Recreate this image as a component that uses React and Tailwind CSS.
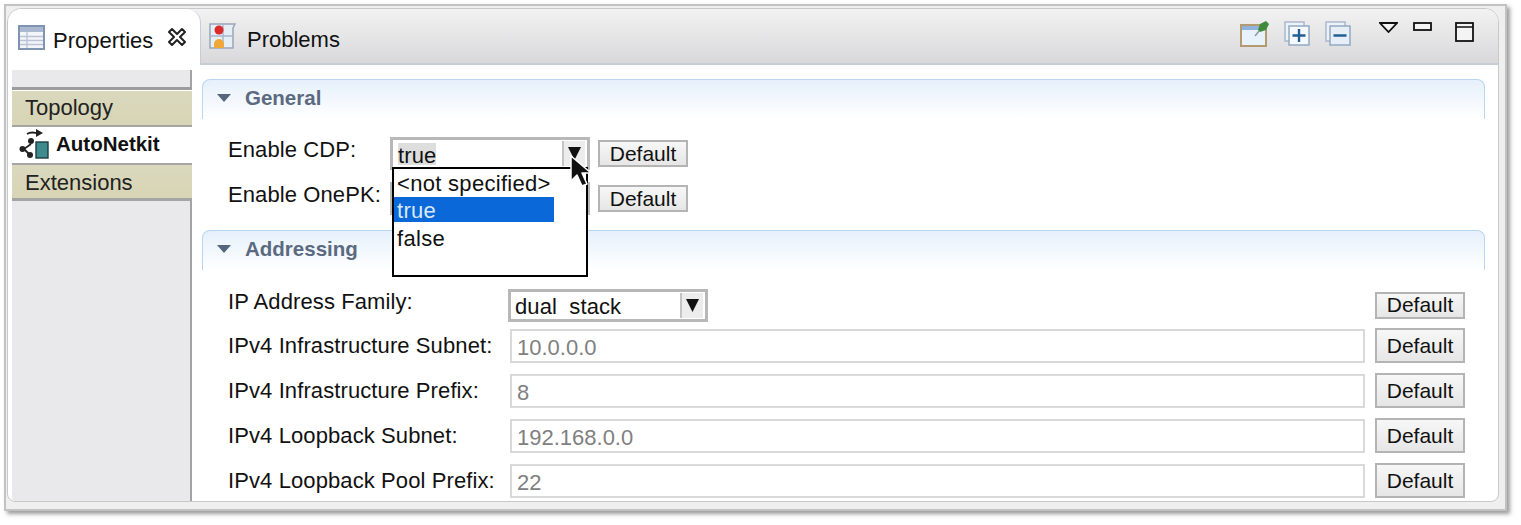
const DefaultButton = ({ tall }) => (
  <button
    className={`flex w-[90px] items-center justify-center border-2 border-[#b4b4b4] bg-gradient-to-b from-[#f7f7f7] to-[#e6e6e6] text-[21px] text-[#111] ${
      tall ? 'h-[35px]' : 'h-[27px]'
    }`}
  >
    Default
  </button>
);

const Triangle = () => (
  <svg width="14" height="8" viewBox="0 0 14 8" className="shrink-0">
    <path d="M0 0h14L7 8z" fill="#55657c" />
  </svg>
);

const SectionHeader = ({ title }) => (
  <div className="flex h-[40px] shrink-0 items-center gap-[14px] rounded-t-[8px] border-x border-t border-[#b9d6f0] bg-gradient-to-b from-[#e6f0fb] to-white pb-[3px] pl-[14px] text-[20.5px] font-bold text-[#5b6a80]">
    <Triangle />
    <span>{title}</span>
  </div>
);

const Combo = ({ value, highlight, clip }) => (
  <div className="flex h-[33px] w-[200px] items-center border-[3px] border-[#b8b8b8] bg-white pl-[5px]">
    {/* clip: box ends just under the baseline, the underscore of dual_stack disappears like in the original */}
    <span
      className={`h-[22px] text-[22px] leading-[26px] tracking-[0.1px] text-[#111] ${
        highlight ? 'bg-[#dedede]' : ''
      } ${clip ? 'ml-[-1px] overflow-hidden' : ''}`}
    >
      {value}
    </span>
    <div className="ml-auto mr-[2px] flex h-[25px] w-[23px] items-center justify-center border-l-2 border-[#c4c4c4] bg-[#ececec]">
      <svg width="13" height="13" viewBox="0 0 13 13">
        <path d="M0 0h13L6.5 13z" fill="#111" />
      </svg>
    </div>
  </div>
);

const SubnetRow = ({ label, value }) => (
  <div className="flex h-[45px] shrink-0 items-center pl-[26px] pr-[20px]">
    <span className="w-[282px] text-[22px] tracking-[0.1px] text-[#111]">{label}</span>
    <div className="flex h-[34px] w-[855px] items-center border-2 border-[#d9d9d9] bg-white pl-[5px] text-[22px] text-[#808080]">
      <span className="mt-[3px]">{value}</span>
    </div>
    <div className="ml-auto">
      <DefaultButton tall />
    </div>
  </div>
);

export default function App() {
  return (
    <div
      className="h-[525px] w-[1521px] overflow-hidden bg-white pl-[4px] pt-[4px]"
      style={{ fontFamily: '"Liberation Sans", Arial, sans-serif' }}
    >
      <div className="h-[507px] w-[1503px] border-2 border-[#c2c2c2] bg-[#efefef] pb-[5px] pl-[1px] pr-[6px] pt-[2px] shadow-[3px_3px_4px_rgba(90,90,90,0.6)]">
        <div className="relative flex h-[494px] w-[1492px] flex-col overflow-hidden rounded-t-[14px] rounded-b-[8px] border border-[#c8c8c8] bg-white">
          {/* tab strip */}
          <div className="flex h-[56px] shrink-0 items-stretch border-b-2 border-[#c6cdd9] bg-gradient-to-b from-[#f2f2f2] to-[#d9d9dc]">
            <div className="mb-[-2px] flex w-[193px] items-center rounded-t-[14px] border-r border-[#c6cdd9] bg-white pl-[10px] text-[22px] text-[#111]">
              <svg width="27" height="25" viewBox="0 0 27 25" className="shrink-0">
                <rect x="1" y="1" width="25" height="23" fill="#f4f5f8" stroke="#7f93b3" strokeWidth="2" />
                <rect x="2" y="2" width="23" height="5" fill="#a9b7cf" />
                <path d="M2 11.5h23M2 15.5h23M2 19.5h23M9 7v16" stroke="#b9c3d5" strokeWidth="1.3" />
              </svg>
              <span className="ml-[8px] mt-[7px]">Properties</span>
              <svg width="20" height="20" viewBox="0 0 20 20" className="ml-[14px] shrink-0">
                <path
                  d="M2 5l3-3 5 5 5-5 3 3-5 5 5 5-3 3-5-5-5 5-3-3 5-5z"
                  fill="#fff"
                  stroke="#222"
                  strokeWidth="2"
                  strokeLinejoin="round"
                />
              </svg>
            </div>
            <div className="flex items-center pl-[8px] text-[22px] text-[#111]">
              <svg width="28" height="28" viewBox="0 0 28 28" className="shrink-0">
                <path d="M1 2h20l5 0-2 4v20H1z" fill="#e6eef6" stroke="#9aa6b6" strokeWidth="1.5" />
                <path d="M1 14h23M14 2v24" stroke="#a9b8cb" strokeWidth="1.5" />
                <circle cx="10" cy="8" r="4.5" fill="#dd2a2a" />
                <path d="M5 26v-4a5 5 0 0 1 10 0v4z" fill="#efa93a" />
              </svg>
              <span className="ml-[10px] mt-[7px]">Problems</span>
            </div>
            <div className="ml-auto flex items-start pr-[24px] pt-[10px]">
              <svg width="30" height="27" viewBox="0 0 30 27" className="mt-[1px]">
                <rect x="1" y="5" width="25" height="21" fill="#e8f2fb" stroke="#b39a72" strokeWidth="2" />
                <rect x="2" y="6" width="23" height="4" fill="#8fb3dc" />
                <path d="M15 16l4-5" stroke="#8a9aa8" strokeWidth="1.5" />
                <path d="M18 10l2-6 6-3 3 3-3 6-6 2z" fill="#3f8a3c" />
              </svg>
              <svg width="26" height="25" viewBox="0 0 26 25" className="ml-[14px] mt-[2px]">
                <rect x="1" y="1" width="19" height="19" fill="#eef3f9" stroke="#a9b9cd" strokeWidth="1.5" />
                <rect x="5" y="5" width="20" height="19" fill="#f5f9fd" stroke="#93a9c2" strokeWidth="1.5" />
                <path d="M15 8v13M8.5 14.500h13" stroke="#1f5f94" strokeWidth="2.4" />
              </svg>
              <svg width="26" height="25" viewBox="0 0 26 25" className="ml-[15px] mt-[2px]">
                <rect x="1" y="1" width="19" height="19" fill="#eef3f9" stroke="#a9b9cd" strokeWidth="1.5" />
                <rect x="5" y="5" width="20" height="19" fill="#e6eef7" stroke="#93a9c2" strokeWidth="1.5" />
                <path d="M8.500 14.500h13" stroke="#1f5f94" strokeWidth="2.6" />
              </svg>
              <svg width="19" height="11" viewBox="0 0 19 11" className="ml-[28px] mt-[3px]">
                <path d="M1 1h17l-8.500 9z" fill="#f4f4f4" stroke="#111" strokeWidth="1.800" />
              </svg>
              <svg width="19" height="9" viewBox="0 0 19 9" className="ml-[15px] mt-[3px]">
                <rect x="1" y="1" width="17" height="7" fill="#f4f4f4" stroke="#111" strokeWidth="1.800" />
              </svg>
              <svg width="19" height="20" viewBox="0 0 19 20" className="ml-[23px] mt-[3px]">
                <rect x="1" y="1" width="17" height="18" fill="#f4f4f4" stroke="#111" strokeWidth="1.800" />
                <path d="M1 5h17" stroke="#111" strokeWidth="1.500" />
              </svg>
            </div>
          </div>

          {/* body */}
          <div className="flex min-h-0 flex-1 pl-[4px]">
            <div className="flex h-full w-[180px] shrink-0 flex-col pt-[5px] text-[22px] text-[#222]">
              <div className="h-[20px] border-b-[3px] border-r-2 border-[#a3a3a3] border-b-[#9c9c9c] bg-[#e9e8ea]" />
              <div className="mt-[1px] flex h-[36px] items-center border-b-2 border-[#a5a5a5] bg-gradient-to-b from-[#dad8bd] to-[#d8d5b6] pb-[2px] pl-[13px]">
                Topology
              </div>
              <div className="flex h-[38px] items-center border-b-2 border-[#a5a5a5] bg-white pb-[2px] pl-[7px] text-[20.5px] font-bold text-[#111]">
                <svg width="30" height="30" viewBox="0 0 30 30" className="shrink-0">
                  <path d="M8 5c3-2 7-2 12 0M12 15L5 20l6 6" stroke="#222" strokeWidth="1.800" fill="none" />
                  <path d="M17 0l7 4-7 4z" fill="#222" />
                  <circle cx="12" cy="12" r="3" fill="#222" />
                  <circle cx="3.500" cy="20" r="3" fill="#222" />
                  <circle cx="11" cy="26" r="3" fill="#222" />
                  <rect x="17" y="13" width="12" height="16" fill="#3f8a8c" stroke="#1d3d44" strokeWidth="1.400" />
                </svg>
                <span className="ml-[7px]">AutoNetkit</span>
              </div>
              <div className="flex h-[36px] items-center border-b-[3px] border-[#a5a5a5] bg-gradient-to-b from-[#dad8bd] to-[#d8d5b6] pl-[13px] pt-[2px]">
                Extensions
              </div>
              <div className="flex-1 border-r-2 border-[#a3a3a3] bg-[#e9e8ea]" />
            </div>

            <div className="ml-[10px] flex min-w-0 flex-1 flex-col pr-[13px] pt-[14px]">
              <SectionHeader title="General" />
              <div className="relative mt-[12px] flex h-[45px] shrink-0 items-center pl-[26px]">
                <span className="mt-[-9px] w-[162px] text-[22px] tracking-[0.1px] text-[#111]">Enable CDP:</span>
                <Combo value="true" highlight />
                <div className="ml-[8px]">
                  <DefaultButton />
                </div>
                {/* open dropdown */}
                <div className="absolute left-[190px] top-[36px] z-10 h-[110px] w-[196px] border-2 border-black bg-white text-[22px] tracking-[0.3px] text-[#111]">
                  <div className="flex h-[28px] items-center pl-[3px] pt-[1px]">&lt;not specified&gt;</div>
                  <div className="flex h-[25px] w-[160px] items-center bg-[#0a68d8] pl-[3px] pt-[2px] text-[#dbe8f8]">true</div>
                  <div className="flex h-[30px] items-center pl-[3px] pt-[3px]">false</div>
                </div>
                <svg width="24" height="34" viewBox="0 0 24 34" className="absolute left-[367px] top-[24px] z-20">
                  <path d="M2 1v25l6-6 5 11 5-2-5-11h9z" fill="#111" stroke="#fff" strokeWidth="1.500" strokeLinejoin="round" />
                </svg>
              </div>
              <div className="flex h-[45px] shrink-0 items-center pl-[26px]">
                <span className="mt-[-9px] w-[162px] text-[22px] tracking-[0.1px] text-[#111]">Enable OnePK:</span>
                <Combo value="" />
                <div className="ml-[8px]">
                  <DefaultButton />
                </div>
              </div>

              <div className="mt-[9px] shrink-0">
                <SectionHeader title="Addressing" />
              </div>
              <div className="mt-[17px] flex h-[36px] shrink-0 items-center pl-[26px] pr-[20px]">
                <span className="mt-[-8px] w-[280px] text-[22px] tracking-[0.1px] text-[#111]">IP Address Family:</span>
                <Combo value="dual_stack" clip />
                <div className="ml-auto">
                  <DefaultButton />
                </div>
              </div>
              <SubnetRow label="IPv4 Infrastructure Subnet:" value="10.0.0.0" />
              <SubnetRow label="IPv4 Infrastructure Prefix:" value="8" />
              <SubnetRow label="IPv4 Loopback Subnet:" value="192.168.0.0" />
              <SubnetRow label="IPv4 Loopback Pool Prefix:" value="22" />
            </div>
          </div>
        </div>
      </div>
    </div>
  );
}
